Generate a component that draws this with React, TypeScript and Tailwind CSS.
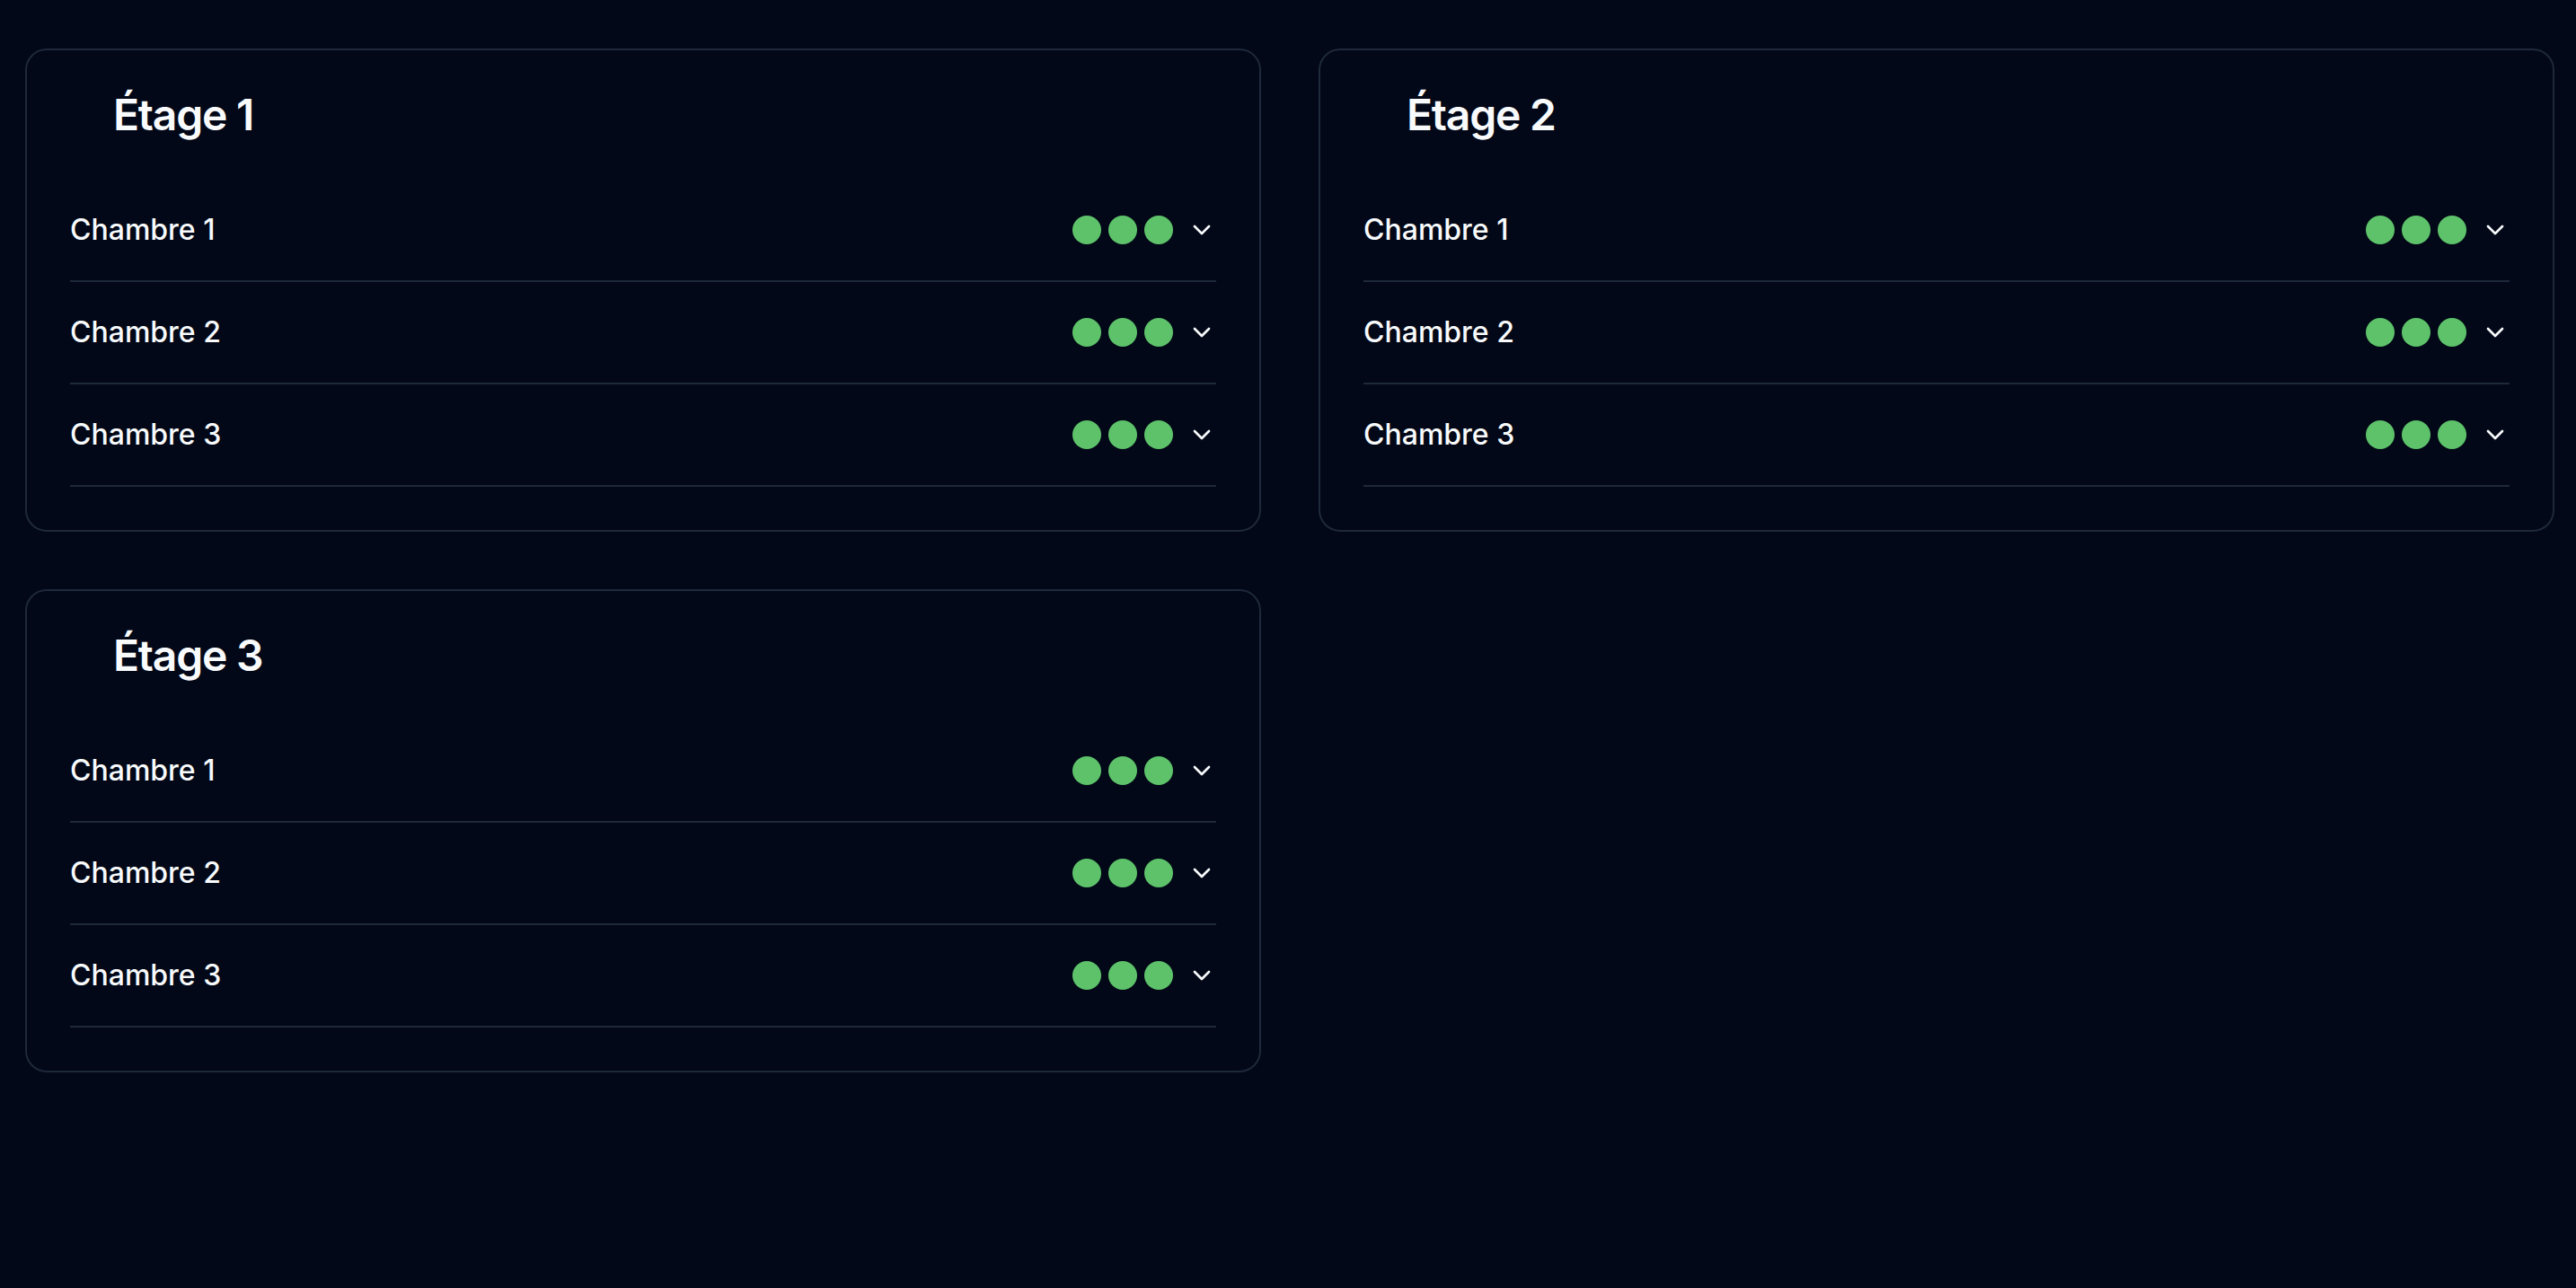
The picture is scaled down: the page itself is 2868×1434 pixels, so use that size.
import React from "react";

function Chevron() {
  return (
    <svg
      width="32"
      height="32"
      viewBox="0 0 24 24"
      fill="none"
      stroke="currentColor"
      strokeWidth="2"
      strokeLinecap="round"
      strokeLinejoin="round"
      className="shrink-0 text-[#f8fafc]"
    >
      <path d="m6 9 6 6 6-6" />
    </svg>
  );
}

function Row({ name }: { name: string }) {
  return (
    <div className="border-b-2 border-[#1e293b]">
      <div className="flex items-center justify-between py-[32px]">
        <span className="text-[32px] leading-[48px] font-medium text-[#f8fafc]">{name}</span>
        <div className="flex items-center gap-[16px]">
          <div className="flex items-center gap-[8px]">
            <span className="block w-[32px] h-[32px] rounded-full bg-[#5dc26a]" />
            <span className="block w-[32px] h-[32px] rounded-full bg-[#5dc26a]" />
            <span className="block w-[32px] h-[32px] rounded-full bg-[#5dc26a]" />
          </div>
          <Chevron />
        </div>
      </div>
    </div>
  );
}

function Floor({ title }: { title: string }) {
  return (
    <div className="rounded-[24px] border-2 border-[#1e293b] bg-[#020817]">
      <div className="p-[48px]">
        <h3 className="pl-[48px] text-[48px] leading-[48px] font-semibold tracking-[-0.025em] text-[#f8fafc]">
          {title}
        </h3>
      </div>
      <div className="px-[48px] pb-[48px]">
        <Row name="Chambre 1" />
        <Row name="Chambre 2" />
        <Row name="Chambre 3" />
      </div>
    </div>
  );
}

export default function App() {
  return (
    <div
      className="min-h-[1434px] w-full bg-[#020817] pt-[54px] pl-[28px] pr-[24px]"
      style={{ fontFamily: "Inter, 'Noto Sans', sans-serif" }}
    >
      <div className="grid grid-cols-2 gap-[64px] items-start">
        <Floor title="Étage 1" />
        <Floor title="Étage 2" />
        <Floor title="Étage 3" />
      </div>
    </div>
  );
}
